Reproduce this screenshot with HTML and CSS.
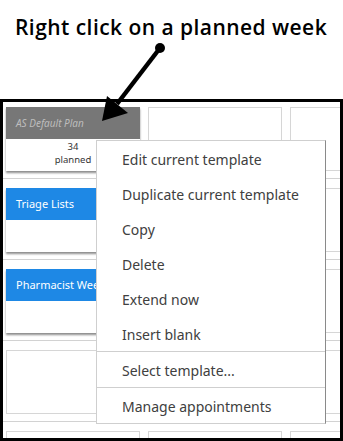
FILE: index.html
```html
<!DOCTYPE html>
<html lang="en">
<head>
  <meta charset="UTF-8" />
  <title>Right click on a planned week</title>
  <link rel="stylesheet" href="styles.css">
</head>
<body>
  <div class="page">
    <h1 class="title">Right click on a planned week</h1>

    <svg class="pointer" width="343" height="130" viewBox="0 0 343 130">
      <line x1="160" y1="48" x2="117" y2="104" stroke="#000" stroke-width="4.5" />
      <circle cx="160" cy="48" r="5" fill="#000" />
      <polygon points="102,121 107,96 128,113" fill="#000" />
    </svg>

    <div class="frame">
      <div class="rows">
        <div class="row">
          <div class="plan plan-default">
            <div class="plan-head">AS Default Plan</div>
            <div class="plan-body">
              <div>34</div>
              <div>planned</div>
            </div>
          </div>
          <div class="slot"></div>
          <div class="slot"></div>
        </div>
        <div class="row">
          <div class="plan">
            <div class="plan-head">Triage Lists</div>
            <div class="plan-body"></div>
          </div>
          <div class="slot"></div>
          <div class="slot"></div>
        </div>
        <div class="row">
          <div class="plan">
            <div class="plan-head">Pharmacist Weekly</div>
            <div class="plan-body"></div>
          </div>
          <div class="slot"></div>
          <div class="slot"></div>
        </div>
        <div class="row">
          <div class="slot"></div>
          <div class="slot"></div>
          <div class="slot"></div>
        </div>
        <div class="row">
          <div class="slot"></div>
          <div class="slot"></div>
          <div class="slot"></div>
        </div>
      </div>

      <ul class="menu">
        <li>Edit current template</li>
        <li>Duplicate current template</li>
        <li>Copy</li>
        <li>Delete</li>
        <li>Extend now</li>
        <li>Insert blank</li>
        <li class="sep">Select template...</li>
        <li class="sep">Manage appointments</li>
      </ul>
    </div>
  </div>
</body>
</html>
```

FILE: styles.css
```css
* {
  box-sizing: border-box;
  margin: 0;
  padding: 0;
}

body {
  background: #ffffff;
  font-family: 'Noto Sans', sans-serif;
}

.page {
  position: relative;
  width: 343px;
  height: 441px;
  overflow: hidden;
}

.title {
  height: 99px;
  padding: 14px 0 0 15px;
  font-family: 'Open Sans', sans-serif;
  font-size: 21px;
  font-weight: 600;
  line-height: 26px;
  letter-spacing: 0.45px;
  color: #000;
  white-space: nowrap;
}

.pointer {
  position: absolute;
  left: 0;
  top: 0;
  z-index: 5;
  pointer-events: none;
}

.frame {
  position: relative;
  height: 342px;
  border: 3px solid #000;
  overflow: hidden;
  background: #fff;
}

.rows {
  margin-top: -4px;
}

.row {
  display: flex;
  gap: 8px;
  padding: 9px 0 7px 3px;
  border-bottom: 1px solid #d2d2d2;
}

.slot,
.plan {
  flex: 0 0 134px;
  height: 64px;
}

.slot {
  border: 1px solid #d6d6d6;
}

.plan {
  display: flex;
  flex-direction: column;
  background: #fff;
  box-shadow: 0 2px 2px rgba(0, 0, 0, 0.45);
}

.plan-head {
  height: 32px;
  padding-left: 10px;
  background: #1e88e5;
  color: #fff;
  font-size: 11px;
  line-height: 32px;
  white-space: nowrap;
  overflow: hidden;
}

.plan-default .plan-head {
  background: #777777;
  color: #bdbdbd;
  font-style: italic;
  font-size: 10px;
}

.plan-body {
  flex: 1;
  padding-top: 1px;
  text-align: center;
  font-size: 9.5px;
  line-height: 13px;
  color: #333;
}

.menu {
  position: absolute;
  left: 93px;
  top: 38px;
  width: 230px;
  list-style: none;
  background: #fff;
  border: 1px solid #cfcfcf;
  border-right-color: #8a8a8a;
  z-index: 3;
}

.menu li {
  height: 35px;
  padding: 4px 0 0 25px;
  font-size: 14px;
  line-height: 30px;
  color: #404040;
  white-space: nowrap;
}

.menu li.sep {
  height: 36px;
  border-top: 1px solid #cfcfcf;
}
```
